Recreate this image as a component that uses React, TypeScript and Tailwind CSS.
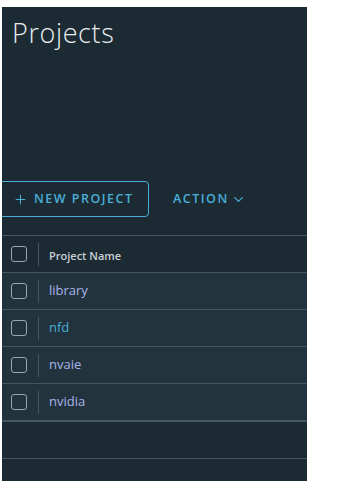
import { Plus, ChevronDown } from "lucide-react";

const projects = [
  { name: "library", color: "text-[#a8b4ea]" },
  { name: "nfd", color: "text-[#49afd9]" },
  { name: "nvaie", color: "text-[#a8b4ea]" },
  { name: "nvidia", color: "text-[#a8b4ea]" },
];

function Checkbox() {
  return <span className="block w-[16px] h-[16px] rounded-[3px] border border-[#9aa5ad]" />;
}

function Row({ children, header }: { children: React.ReactNode; header?: boolean }) {
  return (
    <div className={`flex items-center h-[37px] border-b border-[#455660] ${header ? "" : "bg-[#22333d]"}`}>
      <div className="w-[36px] pl-[9px] flex items-center">
        <Checkbox />
      </div>
      <div className="w-px h-[23px] bg-[#455660]" />
      <div className="pl-[10px]">{children}</div>
    </div>
  );
}

export default function App() {
  return (
    <div className="w-[340px] h-[500px] bg-white pt-[7px] pl-[2px]" style={{ fontFamily: "'Open Sans', 'Noto Sans', sans-serif" }}>
      <div className="w-[305px] h-[474px] bg-[#1c2a33] overflow-hidden flex flex-col">
        <h1 className="pl-[10px] pt-[8px] text-[27px] leading-[36px] font-light text-[#e9ecee] tracking-[0.6px]">Projects</h1>

        <div className="mt-[130px] flex items-center h-[36px]">
          <button className="ml-[-10px] h-[36px] w-[157px] border border-[#49afd9] rounded-[4px] flex items-center pl-[20px] gap-[6px] text-[#49afd9] text-[12.5px] font-semibold tracking-[1.5px]">
            <Plus size={15} strokeWidth={1.6} />
            NEW PROJECT
          </button>
          <button className="ml-[24px] flex items-center gap-[2px] text-[#49afd9] text-[12.5px] font-semibold tracking-[1.5px]">
            ACTION
            <ChevronDown size={15} strokeWidth={2} />
          </button>
        </div>

        <div className="mt-[18px] border-t border-[#455660]">
          <Row header>
            <span className="text-[11px] font-semibold text-[#c9cfd3]">Project Name</span>
          </Row>
          {projects.map((p) => (
            <Row key={p.name}>
              <span className={`text-[13px] leading-[16px] block -mt-[2px] ${p.color}`}>{p.name}</span>
            </Row>
          ))}
          <div className="h-px bg-[#455660]" />
          <div className="h-[37px] border-b border-[#455660]" />
        </div>
      </div>
    </div>
  );
}
